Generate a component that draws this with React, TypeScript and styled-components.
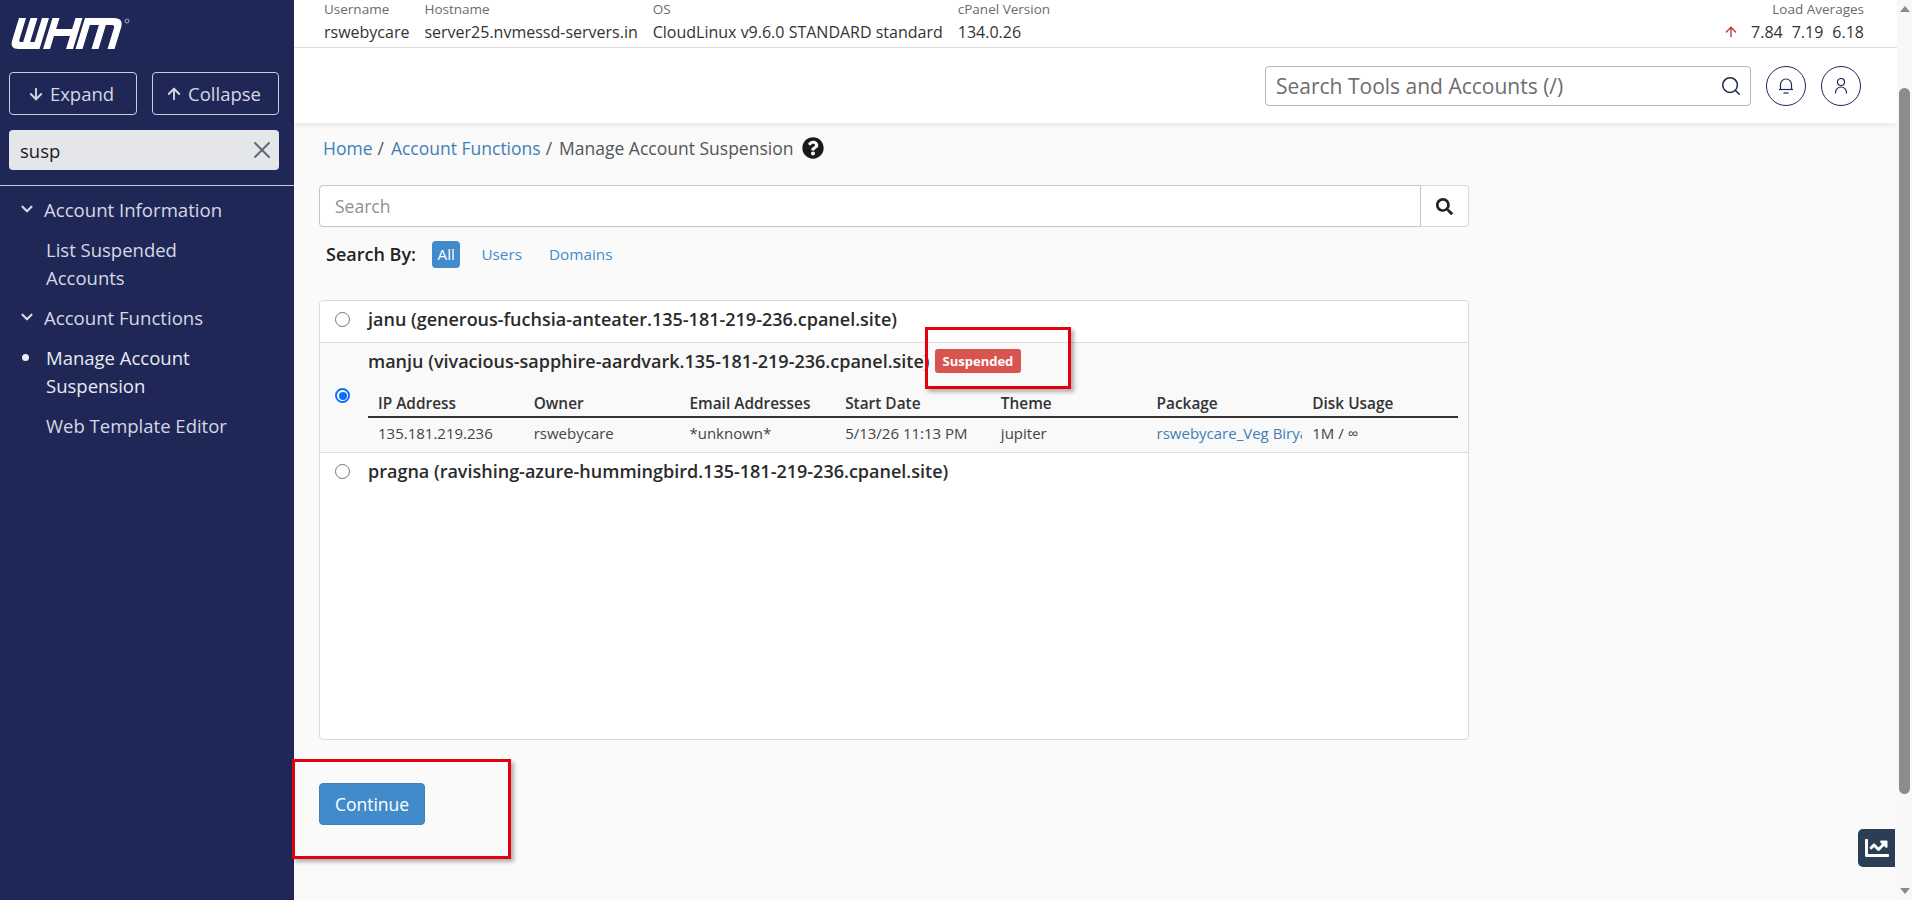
import React from 'react';
import styled, { createGlobalStyle } from 'styled-components';
import { ArrowDown, ArrowUp, ChevronDown, Search as SearchIcon, X } from 'lucide-react';
import { FaSearch, FaQuestionCircle, FaChartLine } from 'react-icons/fa';

const GlobalStyle = createGlobalStyle`
  html, body { margin: 0; padding: 0; height: 100%; overflow: hidden; }
  body { font-family: "Open Sans", "Liberation Sans", sans-serif; color: #333; background: #fafafa; }
  * { box-sizing: border-box; }
`;

const Shell = styled.div`
  display: flex;
  height: 900px;
  position: relative;
  overflow: hidden;
`;

const Sidebar = styled.aside`
  width: 294px;
  flex: none;
  background: #1f2756;
  color: #d5d8e4;
`;

const LogoWrap = styled.div`
  padding: 18px 0 0 9px;
  height: 72px;
`;

const ButtonRow = styled.div`
  display: flex;
  gap: 15px;
  padding: 0 15px 0 9px;
`;

const OutlineButton = styled.button<{ $w: number }>`
  width: ${p => p.$w}px;
  height: 43px;
  display: flex;
  align-items: center;
  justify-content: center;
  gap: 5px;
  padding: 0 5px 0 0;
  background: transparent;
  border: 1px solid #c9cddd;
  border-radius: 4px;
  color: #d5d8e4;
  font: 400 18.5px "Open Sans", sans-serif;
`;

const SideSearch = styled.div`
  margin: 15px 15px 0 9px;
  height: 40px;
  border-radius: 4px;
  background: #e4e6e9;
  color: #1c1c1c;
  display: flex;
  align-items: center;
  justify-content: space-between;
  padding: 0 3px 0 11px;
  font-size: 18.5px;
  svg { color: #5f6b76; }
`;

const SideRule = styled.div`
  height: 1px;
  margin-top: 15px;
  background: #c9cddd;
`;

const Nav = styled.nav`
  padding-top: 7px;
`;

const NavGroup = styled.div`
  display: flex;
  align-items: center;
  gap: 8px;
  height: 32px;
  padding-left: 18px;
  font-size: 18.6px;
  margin-bottom: 5px;
  &:not(:first-child) { margin-top: 3px; }
`;

const NavItem = styled.div<{ $active?: boolean }>`
  position: relative;
  padding: 6px 40px 6px 46px;
  font-size: 18.5px;
  line-height: 28px;
  color: ${p => (p.$active ? '#e8eaf2' : '#d5d8e4')};
  &::before {
    content: ${p => (p.$active ? "''" : 'none')};
    position: absolute;
    left: 22px;
    top: 16px;
    width: 7px;
    height: 7px;
    border-radius: 50%;
    background: #e8eef8;
  }
`;

const Main = styled.main`
  flex: 1;
  min-width: 0;
  display: flex;
  flex-direction: column;
`;

const StatsBar = styled.div`
  height: 48px;
  background: #fff;
  border-bottom: 1px solid #e2e2e2;
  display: flex;
  justify-content: space-between;
  padding: 0 33px 0 30px;
`;

const Stats = styled.div`
  display: flex;
  gap: 15px;
`;

const Stat = styled.div<{ $right?: boolean }>`
  display: flex;
  flex-direction: column;
  align-items: ${p => (p.$right ? 'flex-end' : 'flex-start')};
`;

const StatLabel = styled.span`
  font-size: 13.5px;
  line-height: 18px;
  color: #6b6b6b;
`;

const StatValue = styled.span`
  font-size: 16px;
  line-height: 28px;
  color: #333;
  display: flex;
  align-items: center;
  gap: 9px;
  svg { color: #c0303a; margin-right: 3px; }
`;

const TopHeader = styled.header`
  height: 75px;
  background: #fff;
  box-shadow: 0 2px 5px rgba(0, 0, 0, 0.08);
  display: flex;
  justify-content: flex-end;
  align-items: flex-start;
  gap: 15px;
  padding: 18px 36px 0 0;
`;

const ToolSearch = styled.div`
  width: 486px;
  height: 40px;
  background: #fff;
  border: 1px solid #b4b6bb;
  border-radius: 4px;
  display: flex;
  align-items: center;
  justify-content: space-between;
  padding: 0 8px 0 10px;
  font-size: 21px;
  color: #6d6d6d;
  svg { color: #1f2a44; }
`;

const CircleButton = styled.div`
  width: 40px;
  height: 40px;
  border: 1px solid #1f2756;
  border-radius: 50%;
  display: flex;
  align-items: center;
  justify-content: center;
  color: #1f2756;
`;

const Content = styled.div`
  flex: 1;
  padding: 0 0 0 25px;
  width: 1175px;
`;

const Crumbs = styled.div`
  height: 50px;
  display: flex;
  align-items: center;
  font-size: 17.5px;
  padding-left: 4px;
  color: #555;
  gap: 5px;
  a { color: #3f7fb5; text-decoration: none; }
  svg { color: #1a1a1a; margin-left: 4px; }
`;

const CrumbSlash = styled.span`
  margin-right: 2px;
`;

const SearchGroup = styled.div`
  margin-top: 12px;
  display: flex;
  height: 42px;
`;

const SearchField = styled.div`
  flex: 1;
  background: #fff;
  border: 1px solid #c4c4c4;
  border-radius: 4px 0 0 4px;
  padding: 0 15px;
  font-size: 17.5px;
  color: #909090;
  display: flex;
  align-items: center;
`;

const SearchButton = styled.div`
  width: 48px;
  background: #fff;
  border: 1px solid #d8d8d8;
  border-left: none;
  border-radius: 0 4px 4px 0;
  display: flex;
  align-items: center;
  justify-content: center;
  color: #222;
`;

const SearchBy = styled.div`
  display: flex;
  align-items: center;
  height: 28px;
  margin-top: 13px;
  padding-left: 7px;
  font-size: 15.3px;
`;

const SearchByLabel = styled.b`
  font-size: 18px;
  font-weight: 600;
  color: #222;
  margin-right: 16px;
`;

const Pill = styled.a<{ $active?: boolean }>`
  padding: 0 ${p => (p.$active ? 5.5 : 0)}px;
  height: 27px;
  line-height: 27px;
  border-radius: 4px;
  margin-right: ${p => (p.$active ? 21 : 27)}px;
  background: ${p => (p.$active ? '#428bca' : 'transparent')};
  color: ${p => (p.$active ? '#fff' : '#428bca')};
`;

const ListPanel = styled.div`
  margin-top: 32px;
  height: 440px;
  background: #fff;
  border: 1px solid #d9d9d9;
  border-radius: 4px;
  overflow: hidden;
`;

const AccountRow = styled.div<{ $selected?: boolean; $last?: boolean }>`
  display: flex;
  align-items: ${p => (p.$selected ? 'center' : 'flex-start')};
  background: ${p => (p.$selected ? '#f9f9f9' : '#fff')};
  border-bottom: ${p => (p.$last ? 'none' : '1px solid #dedede')};
  padding: ${p => (p.$selected ? '0 0 4px' : '6px 0 0')};
  min-height: 42px;
`;

const Radio = styled.span<{ $on?: boolean }>`
  width: 15px;
  height: 15px;
  flex: none;
  margin-top: ${p => (p.$on ? 0 : 5)}px;
  margin-left: 15px;
  border-radius: 50%;
  background: #fff;
  border: ${p => (p.$on ? '2px solid #0d6efd' : '1.5px solid #767676')};
  position: relative;
  ${p => p.$on && `
    &::after {
      content: '';
      position: absolute;
      inset: 1.5px;
      border-radius: 50%;
      background: #0d6efd;
    }
  `}
`;

const RowBody = styled.div`
  margin-left: 18px;
  flex: 1;
  min-width: 0;
`;

const AccountTitle = styled.div<{ $selected?: boolean }>`
  font-size: 18px;
  font-weight: 600;
  line-height: 24px;
  color: #2b2b2b;
  display: flex;
  align-items: center;
  padding-top: ${p => (p.$selected ? '6px' : '0')};
`;

const Badge = styled.span`
  margin-left: 5px;
  height: 24px;
  padding: 0 8px;
  line-height: 24px;
  background: #d9534f;
  border-radius: 3px;
  color: #fff;
  font-size: 13px;
  font-weight: 700;
`;

const InfoTable = styled.div`
  width: 1090px;
  margin-top: 18px;
`;

const TableLine = styled.div<{ $head?: boolean }>`
  display: grid;
  grid-template-columns: repeat(7, 1fr);
  height: ${p => (p.$head ? 27 : 30)}px;
  align-items: center;
  border-bottom: ${p => (p.$head ? '2px solid #333' : 'none')};
  font-size: ${p => (p.$head ? '15.4px' : '15px')};
  font-weight: ${p => (p.$head ? 600 : 400)};
  color: ${p => (p.$head ? '#333' : '#444')};
`;

const Cell = styled.div<{ $link?: boolean }>`
  padding: 0 0 0 10px;
  white-space: nowrap;
  overflow: hidden;
  color: ${p => (p.$link ? '#3f7fb5' : 'inherit')};
`;

const ContinueButton = styled.button`
  margin-top: 43px;
  width: 106px;
  height: 42px;
  background: #428bca;
  border: 1px solid #3f80b8;
  border-radius: 4px;
  color: #fff;
  font: 400 17.5px "Open Sans", sans-serif;
`;

const Callout = styled.div<{ $x: number; $y: number; $w: number; $h: number }>`
  position: absolute;
  left: ${p => p.$x}px;
  top: ${p => p.$y}px;
  width: ${p => p.$w}px;
  height: ${p => p.$h}px;
  border: 3px solid #e3000f;
  box-shadow: 3px 3px 4px rgba(0, 0, 0, 0.3);
`;

const ChartTab = styled.div`
  position: absolute;
  left: 1858px;
  top: 829px;
  width: 37px;
  height: 38px;
  background: #2a3f54;
  border-radius: 5px 0 0 5px;
  color: #fff;
  display: flex;
  align-items: center;
  justify-content: center;
`;

const ScrollTrack = styled.div`
  width: 15px;
  flex: none;
  background: #f8f8f8;
  display: flex;
  flex-direction: column;
  align-items: center;
`;

const ScrollArrow = styled.div<{ $down?: boolean }>`
  width: 0;
  height: 0;
  margin: 6px 0;
  border-left: 5px solid transparent;
  border-right: 5px solid transparent;
  ${p => (p.$down ? 'border-top: 6px solid #8a8a8a;' : 'border-bottom: 6px solid #8a8a8a;')}
`;

const ScrollThumb = styled.div`
  width: 11px;
  height: 706px;
  margin-top: 70px;
  margin-bottom: auto;
  background: #8c8c8c;
  border-radius: 6px;
`;

const Logo = () => (
  <svg width="122" height="32" viewBox="0 0 120 32" fill="none">
    <g stroke="#fff" strokeWidth="7" transform="skewX(-17)">
      <path d="M12.5 0V22Q12.5 27.5 18 27.5H35.5M24 0V27.5M35.5 0V31" />
      <path d="M46 0V31M69 0V31M46 14.5H69" />
      <path d="M78.5 31V3.5H104Q110.5 3.5 110.5 10V31M94.5 3.5V31" />
    </g>
    <circle cx="117" cy="3" r="2" stroke="#fff" strokeWidth="0.6" />
  </svg>
);

const BellGlyph = () => (
  <svg width="16" height="16" viewBox="0 0 16 16" fill="none" stroke="currentColor" strokeWidth="1.2">
    <path d="M2.5 11V6.5a5.5 5.5 0 0 1 11 0V11" />
    <path d="M1 11.5H15" />
    <path d="M5.5 15H10.5" />
  </svg>
);

const UserGlyph = () => (
  <svg width="14" height="16" viewBox="0 0 14 16" fill="none" stroke="currentColor" strokeWidth="1.2">
    <circle cx="7" cy="4" r="3.5" />
    <path d="M1.5 15.5v-1a5.5 5.5 0 0 1 11 0v1" />
  </svg>
);

const columns = ['IP Address', 'Owner', 'Email Addresses', 'Start Date', 'Theme', 'Package', 'Disk Usage'];

export default function App() {
  return (
    <>
      <GlobalStyle />
      <Shell>
        <Sidebar>
          <LogoWrap>
            <Logo />
          </LogoWrap>
          <ButtonRow>
            <OutlineButton $w={128}><ArrowDown size={18} strokeWidth={2.5} />Expand</OutlineButton>
            <OutlineButton $w={127}><ArrowUp size={18} strokeWidth={2.5} />Collapse</OutlineButton>
          </ButtonRow>
          <SideSearch>susp<X size={28} strokeWidth={1.7} /></SideSearch>
          <SideRule />
          <Nav>
            <NavGroup><ChevronDown size={18} strokeWidth={3} />Account Information</NavGroup>
            <NavItem>List Suspended Accounts</NavItem>
            <NavGroup><ChevronDown size={18} strokeWidth={3} />Account Functions</NavGroup>
            <NavItem $active>Manage Account Suspension</NavItem>
            <NavItem>Web Template Editor</NavItem>
          </Nav>
        </Sidebar>
        <Main>
          <StatsBar>
            <Stats>
              <Stat><StatLabel>Username</StatLabel><StatValue>rswebycare</StatValue></Stat>
              <Stat><StatLabel>Hostname</StatLabel><StatValue>server25.nvmessd-servers.in</StatValue></Stat>
              <Stat><StatLabel>OS</StatLabel><StatValue>CloudLinux v9.6.0 STANDARD standard</StatValue></Stat>
              <Stat><StatLabel>cPanel Version</StatLabel><StatValue>134.0.26</StatValue></Stat>
            </Stats>
            <Stat $right>
              <StatLabel>Load Averages</StatLabel>
              <StatValue><ArrowUp size={16} /><span>7.84</span><span>7.19</span><span>6.18</span></StatValue>
            </Stat>
          </StatsBar>
          <TopHeader>
            <ToolSearch>Search Tools and Accounts (/)<SearchIcon size={22} strokeWidth={1.7} /></ToolSearch>
            <CircleButton><BellGlyph /></CircleButton>
            <CircleButton><UserGlyph /></CircleButton>
          </TopHeader>
          <Content>
            <Crumbs>
              <a>Home</a><CrumbSlash>/</CrumbSlash><a>Account Functions</a><CrumbSlash>/</CrumbSlash><span>Manage Account Suspension</span>
              <FaQuestionCircle size={22} />
            </Crumbs>
            <SearchGroup>
              <SearchField>Search</SearchField>
              <SearchButton><FaSearch size={17} /></SearchButton>
            </SearchGroup>
            <SearchBy>
              <SearchByLabel>Search By:</SearchByLabel>
              <Pill $active>All</Pill>
              <Pill>Users</Pill>
              <Pill>Domains</Pill>
            </SearchBy>
            <ListPanel>
              <AccountRow>
                <Radio />
                <RowBody><AccountTitle>janu (generous-fuchsia-anteater.135-181-219-236.cpanel.site)</AccountTitle></RowBody>
              </AccountRow>
              <AccountRow $selected>
                <Radio $on />
                <RowBody>
                  <AccountTitle $selected>manju (vivacious-sapphire-aardvark.135-181-219-236.cpanel.site)<Badge>Suspended</Badge></AccountTitle>
                  <InfoTable>
                    <TableLine $head>{columns.map(c => <Cell key={c}>{c}</Cell>)}</TableLine>
                    <TableLine>
                      <Cell>135.181.219.236</Cell>
                      <Cell>rswebycare</Cell>
                      <Cell>*unknown*</Cell>
                      <Cell>5/13/26 11:13 PM</Cell>
                      <Cell>jupiter</Cell>
                      <Cell $link>rswebycare_Veg Biryani</Cell>
                      <Cell>1M / ∞</Cell>
                    </TableLine>
                  </InfoTable>
                </RowBody>
              </AccountRow>
              <AccountRow $last>
                <Radio />
                <RowBody><AccountTitle>pragna (ravishing-azure-hummingbird.135-181-219-236.cpanel.site)</AccountTitle></RowBody>
              </AccountRow>
            </ListPanel>
            <ContinueButton>Continue</ContinueButton>
          </Content>
        </Main>
        <ScrollTrack>
          <ScrollArrow />
          <ScrollThumb />
          <ScrollArrow $down />
        </ScrollTrack>
        <Callout $x={925} $y={327} $w={146} $h={62} />
        <Callout $x={292} $y={759} $w={219} $h={100} />
        <ChartTab><FaChartLine size={24} /></ChartTab>
      </Shell>
    </>
  );
}
